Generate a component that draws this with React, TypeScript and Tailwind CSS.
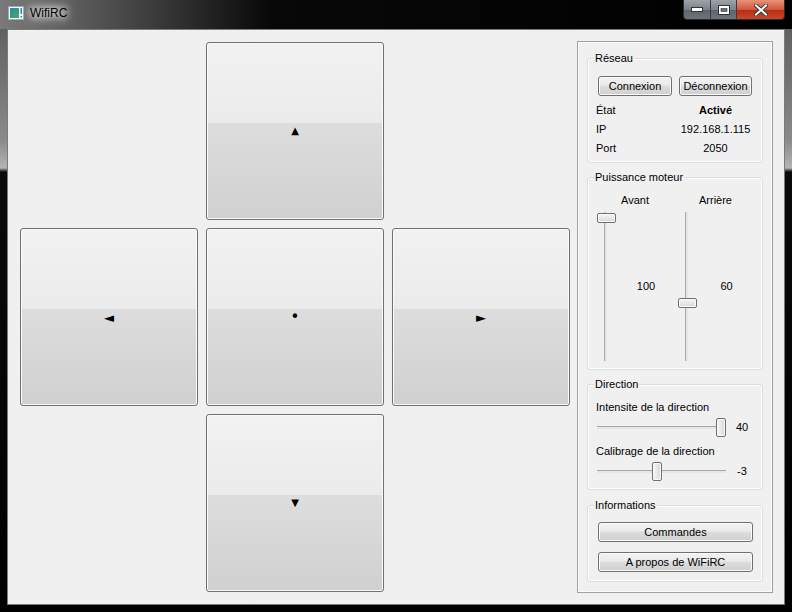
import React from 'react'

const font = "font-['Liberation_Sans',Arial,sans-serif]"

function Btn({ children, className = '' }: { children: React.ReactNode; className?: string }) {
  return (
    <div
      className={`flex items-center justify-center rounded-[3px] border border-[#707070] bg-[linear-gradient(to_bottom,#f2f2f2_0%,#ebebeb_45%,#dddddd_50%,#cfcfcf_100%)] text-[11px] text-black shadow-[inset_0_0_0_1px_#fbfbfb] ${className}`}
    >
      {children}
    </div>
  )
}

function BigBtn({ glyph, size = 'text-[10px]' }: { glyph: string; size?: string }) {
  return (
    <div className="flex items-center justify-center rounded-[3px] border border-[#707070] bg-[linear-gradient(to_bottom,#f2f2f2_0%,#ebebeb_45.5%,#dddddd_45.5%,#d0d0d0_100%)] shadow-[inset_0_0_0_1px_#fafafa]">
      <span className={`font-['DejaVu_Sans',sans-serif] leading-none text-black ${size}`}>{glyph}</span>
    </div>
  )
}

function Group({ title, className = '', children }: { title: string; className?: string; children: React.ReactNode }) {
  return (
    <div className={`relative rounded-[3px] border border-[#d5dfe5] shadow-[inset_0_0_0_1px_#fdfdfd] ${className}`}>
      <span className="absolute -top-[8px] left-[6px] bg-[#f0f0f0] px-[1px] text-[11px] leading-[14px]">{title}</span>
      {children}
    </div>
  )
}

function VSlider({ top }: { top: number }) {
  return (
    <div className="relative h-[149px] w-[19px] shrink-0">
      <div className="absolute bottom-0 left-[7px] top-0 w-[3px] border-l border-[#a8a8a8] bg-[#e6e6e6]" />
      <div
        className="absolute left-0 h-[10px] w-[19px] rounded-[2px] border border-[#707070] bg-[linear-gradient(to_bottom,#f6f6f6_0%,#e8e8e8_50%,#d6d6d6_100%)] shadow-[inset_0_0_0_1px_#fbfbfb]"
        style={{ top }}
      />
    </div>
  )
}

function HSlider({ left }: { left: number }) {
  return (
    <div className="relative h-[19px] w-[129px] shrink-0">
      <div className="absolute left-0 right-0 top-[8px] h-[3px] border-t border-[#a8a8a8] bg-[#e6e6e6]" />
      <div
        className="absolute top-0 h-[19px] w-[10px] rounded-[2px] border border-[#707070] bg-[linear-gradient(to_right,#f6f6f6_0%,#e8e8e8_50%,#d6d6d6_100%)] shadow-[inset_0_0_0_1px_#fbfbfb]"
        style={{ left }}
      />
    </div>
  )
}

export default function App() {
  return (
    <div
      className={`${font} relative flex h-[612px] w-[792px] flex-col overflow-hidden bg-[linear-gradient(to_bottom,#555_0px,#8a8a8a_140px,#b4b4b4_168px,#0a0a0a_172px,#000_100%)] px-[7px] pb-[7px]`}
    >
      {/* Title bar */}
      <div className="-mx-[7px] flex h-[29px] items-center bg-[linear-gradient(to_right,#7a7a7a_0px,#4a4a4a_120px,#080808_270px,#000_100%)] pb-[3px] pl-[8px]">
        <svg width="16" height="14" viewBox="0 0 16 14">
          <defs>
            <linearGradient id="ic" x1="0" y1="0" x2="1" y2="1">
              <stop offset="0" stopColor="#2a8c9a" />
              <stop offset="1" stopColor="#4aa866" />
            </linearGradient>
          </defs>
          <rect x="0.5" y="0.5" width="15" height="13" fill="#f4f8fa" stroke="#9aaab4" />
          <rect x="2" y="2" width="9" height="10" fill="url(#ic)" />
          <rect x="12.5" y="2" width="1.5" height="6" fill="#3a7ad0" />
          <rect x="12.5" y="10" width="1.5" height="1.5" fill="#3a7ad0" />
        </svg>
        <span className="ml-[6px] text-[12px] text-black [text-shadow:0_0_6px_#fff,0_0_10px_#fff,0_0_14px_#fff]">WifiRC</span>
      </div>

      {/* Caption buttons */}
      <div className="absolute right-[7px] top-0 flex h-[20px] overflow-hidden rounded-b-[4px] border border-t-0 border-[#2c2c2c]">
        <div className="flex w-[27px] items-center justify-center border-r border-[#3a3a3a] bg-[linear-gradient(to_bottom,#9ea3aa_0%,#7c8289_50%,#5d636a_52%,#6f757c_100%)]">
          <svg width="12" height="5" viewBox="0 0 12 5">
            <rect x="0.5" y="0.5" width="11" height="4" fill="#fff" stroke="#333" />
          </svg>
        </div>
        <div className="flex w-[26px] items-center justify-center border-r border-[#3a3a3a] bg-[linear-gradient(to_bottom,#9ea3aa_0%,#7c8289_50%,#5d636a_52%,#6f757c_100%)]">
          <svg width="12" height="10" viewBox="0 0 12 10">
            <rect x="0.5" y="0.5" width="11" height="9" fill="#fff" stroke="#333" />
            <rect x="3" y="3.5" width="6" height="3" fill="#6b7178" stroke="#333" strokeWidth="0.6" />
          </svg>
        </div>
        <div className="flex w-[47px] items-center justify-center bg-[linear-gradient(to_bottom,#e6927c_0%,#d0583a_50%,#b92b12_52%,#c8482a_100%)]">
          <svg width="14" height="12" viewBox="0 0 14 12">
            <path d="M2 1.5 L12 10.5 M12 1.5 L2 10.5" stroke="#3a3a3a" strokeWidth="4" strokeLinecap="square" />
            <path d="M2 1.5 L12 10.5 M12 1.5 L2 10.5" stroke="#fff" strokeWidth="2" strokeLinecap="square" />
          </svg>
        </div>
      </div>

      {/* Client area */}
      <div className="flex flex-1 border border-[#7a7a7a] bg-[#f0f0f0] pl-[12px] pt-[12px] text-black">
        {/* Direction pad */}
        <div className="grid h-[550px] grid-cols-[178px_178px_178px] grid-rows-[178px_178px_178px] gap-[8px]">
          <div />
          <BigBtn glyph="▲" />
          <div />
          <BigBtn glyph="◄" size="text-[13px]" />
          <BigBtn glyph="•" size="text-[15px]" />
          <BigBtn glyph="►" size="text-[13px]" />
          <div />
          <BigBtn glyph="▼" />
          <div />
        </div>

        {/* Side panel */}
        <div className="ml-[7px] mt-[-1px] flex h-[552px] w-[196px] flex-col border border-[#a0a0a0] px-[9px] shadow-[inset_0_0_0_1px_#fcfcfc]">
          <Group title="Réseau" className="mt-[16px] h-[105px] pl-[10px] pt-[17px]">
            <div className="flex gap-[7px]">
              <Btn className="h-[20px] w-[74px]">Connexion</Btn>
              <Btn className="h-[20px] w-[73px]">Déconnexion</Btn>
            </div>
            <div className="mt-[5px] grid grid-cols-[74px_73px] gap-x-[7px] text-[11px] leading-[19px]">
              <span className="-ml-[2px]">État</span>
              <span className="text-center font-bold">Activé</span>
              <span className="-ml-[2px]">IP</span>
              <span className="text-center">192.168.1.115</span>
              <span className="-ml-[2px]">Port</span>
              <span className="text-center">2050</span>
            </div>
          </Group>

          <Group title="Puissance moteur" className="mt-[14px] h-[193px] pl-[10px] pt-[15px]">
            <div className="grid grid-cols-[74px_73px] gap-x-[7px] text-[11px]">
              <span className="h-[15px] text-center leading-[15px]">Avant</span>
              <span className="h-[15px] text-center leading-[15px]">Arrière</span>
              <div className="-ml-[1px] mt-[4px] flex items-center">
                <VSlider top={1} />
                <span className="flex-1 pl-[4px] text-center">100</span>
              </div>
              <div className="-ml-[1px] mt-[4px] flex items-center">
                <VSlider top={86} />
                <span className="flex-1 pl-[4px] text-center">60</span>
              </div>
            </div>
          </Group>

          <Group title="Direction" className="mt-[14px] h-[106px] pl-[8px] pt-[15px] text-[11px]">
            <div className="h-[14px] leading-[14px]">Intensite de la direction</div>
            <div className="mt-[4px] flex items-center">
              <div className="ml-[1px]">
                <HSlider left={119} />
              </div>
              <span className="ml-[1px] w-[30px] text-center">40</span>
            </div>
            <div className="mt-[7px] h-[14px] leading-[14px]">Calibrage de la direction</div>
            <div className="mt-[4px] flex items-center">
              <div className="ml-[1px]">
                <HSlider left={55} />
              </div>
              <span className="ml-[1px] w-[30px] text-center">-3</span>
            </div>
          </Group>

          <Group title="Informations" className="mt-[15px] h-[77px] pl-[10px] pt-[16px]">
            <Btn className="h-[20px] w-[155px]">Commandes</Btn>
            <Btn className="mt-[10px] h-[20px] w-[155px]">A propos de WiFiRC</Btn>
          </Group>
        </div>
      </div>
    </div>
  )
}
